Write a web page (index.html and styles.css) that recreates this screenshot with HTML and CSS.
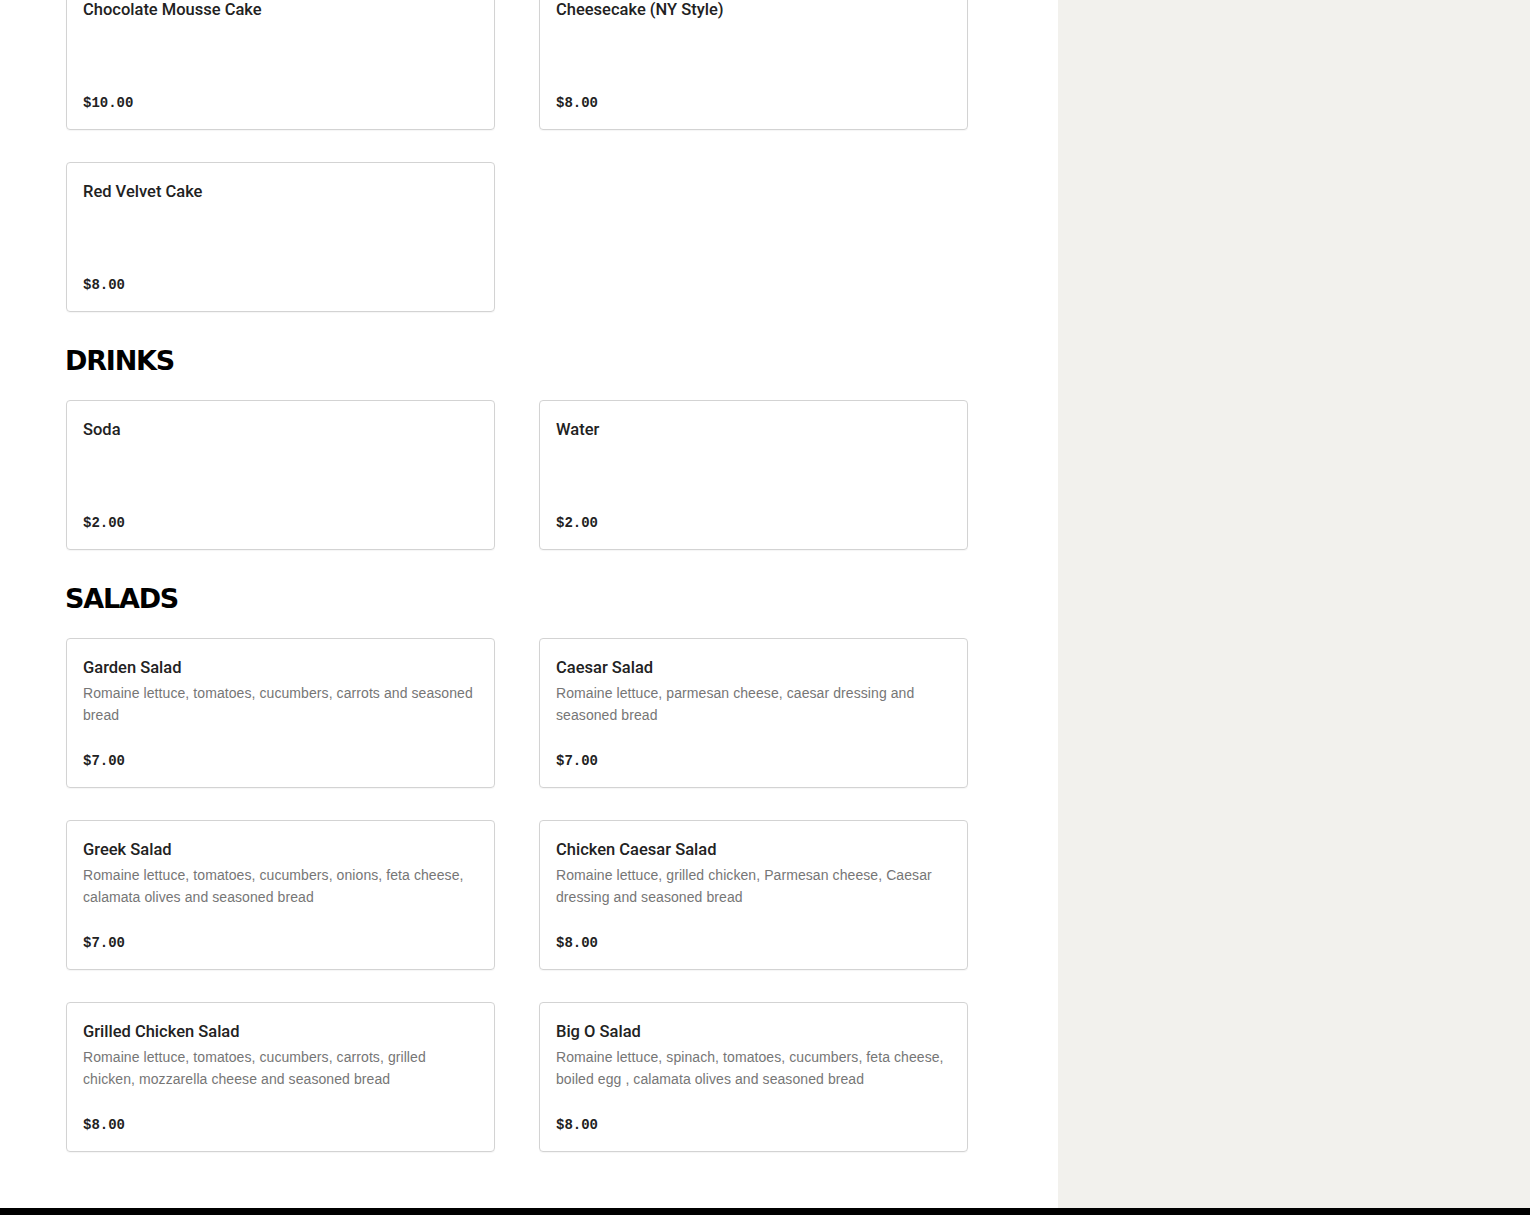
FILE: index.html
```html
<!DOCTYPE html>
<html>
<head>
<meta charset="utf-8">
<link rel="stylesheet" href="styles.css">
</head>
<body>
<div class="page">
  <main class="menu">
    <section class="section first">
      <div class="grid">
        <div class="card"><div class="name">Chocolate Mousse Cake</div><div class="price">$10.00</div></div>
        <div class="card"><div class="name">Cheesecake (NY Style)</div><div class="price">$8.00</div></div>
        <div class="card"><div class="name">Red Velvet Cake</div><div class="price">$8.00</div></div>
      </div>
    </section>
    <section class="section">
      <h2 class="heading">DRINKS</h2>
      <div class="grid">
        <div class="card"><div class="name">Soda</div><div class="price">$2.00</div></div>
        <div class="card"><div class="name">Water</div><div class="price">$2.00</div></div>
      </div>
    </section>
    <section class="section">
      <h2 class="heading">SALADS</h2>
      <div class="grid">
        <div class="card"><div class="name">Garden Salad</div><div class="desc">Romaine lettuce, tomatoes, cucumbers, carrots and seasoned bread</div><div class="price">$7.00</div></div>
        <div class="card"><div class="name">Caesar Salad</div><div class="desc">Romaine lettuce, parmesan cheese, caesar dressing and seasoned bread</div><div class="price">$7.00</div></div>
        <div class="card"><div class="name">Greek Salad</div><div class="desc">Romaine lettuce, tomatoes, cucumbers, onions, feta cheese, calamata olives and seasoned bread</div><div class="price">$7.00</div></div>
        <div class="card"><div class="name">Chicken Caesar Salad</div><div class="desc">Romaine lettuce, grilled chicken, Parmesan cheese, Caesar dressing and seasoned bread</div><div class="price">$8.00</div></div>
        <div class="card"><div class="name">Grilled Chicken Salad</div><div class="desc">Romaine lettuce, tomatoes, cucumbers, carrots, grilled chicken, mozzarella cheese and seasoned bread</div><div class="price">$8.00</div></div>
        <div class="card"><div class="name">Big O Salad</div><div class="desc">Romaine lettuce, spinach, tomatoes, cucumbers, feta cheese, boiled egg , calamata olives and seasoned bread</div><div class="price">$8.00</div></div>
      </div>
    </section>
  </main>
  <aside class="side"></aside>
</div>
<footer class="footer"></footer>
</body>
</html>
```

FILE: styles.css
```css
* { box-sizing: border-box; }
html, body { margin: 0; padding: 0; background: #fff; }
body { font-family: "Liberation Sans", Arial, sans-serif; color: #222; overflow: hidden; }
.page { display: flex; height: 1208px; overflow: hidden; }
.menu { width: 1058px; flex: none; padding: 0 90px 0 66px; }
.side { flex: 1; background: #f2f1ed; }
.section { margin-top: 32px; }
.section.first { margin-top: -20px; }
.heading {
  margin: 0 0 24px -1px;
  padding-top: 1px;
  font-family: "DejaVu Sans", sans-serif;
  font-weight: 900;
  font-size: 27px;
  line-height: 31px;
  letter-spacing: -1.2px;
  color: #000;
}
.grid { display: grid; grid-template-columns: 429px 429px; column-gap: 44px; row-gap: 32px; }
.card {
  height: 150px;
  border: 1px solid #d3d3d3;
  border-radius: 4px;
  padding: 16px;
  display: flex;
  flex-direction: column;
  box-shadow: 0 1px 1px rgba(0,0,0,0.04);
}
.name { padding-top: 1px; font-family: Roboto, "Liberation Sans", sans-serif; font-size: 16.5px; line-height: 24px; font-weight: 500; color: #222; }
.desc { margin-top: 2px; font-size: 14px; line-height: 22px; letter-spacing: 0.08px; color: #767676; }
.price { margin-top: auto; font-family: "Liberation Mono", monospace; font-size: 14px; line-height: 20px; font-weight: 700; color: #222; }
.footer { height: 7px; background: #000; }
```
